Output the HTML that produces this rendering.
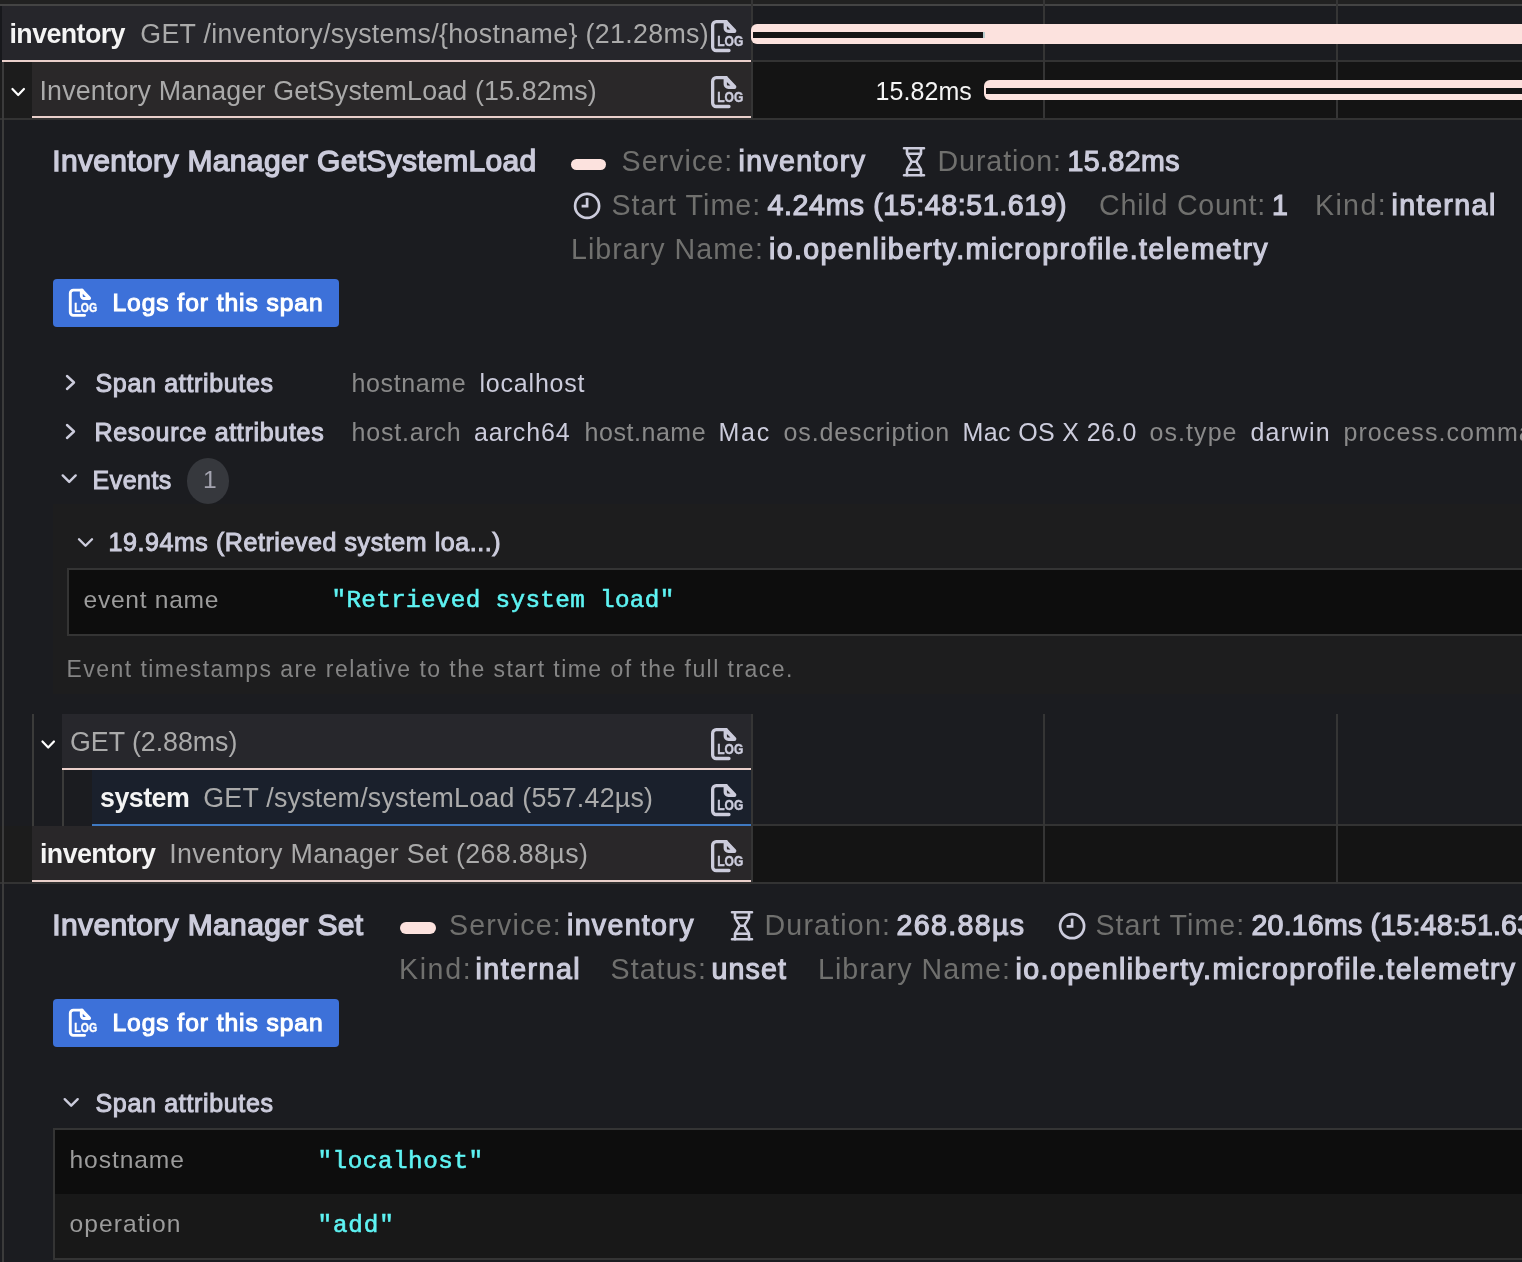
<!DOCTYPE html><html lang="en"><head><meta charset="utf-8"><title>Trace view</title><style>
html,body{margin:0;padding:0;background:#1b1c20;overflow:hidden;}
html{width:1522px;height:1262px;}
body{width:1522px;height:1262px;position:relative;overflow:hidden;font-family:"Liberation Sans", sans-serif;}
.r{position:absolute;}
.t{position:absolute;white-space:pre;line-height:1;margin:0;padding:0;}
svg{position:absolute;overflow:visible;will-change:transform;}
.txt{position:absolute;left:0;top:0;width:100%;height:100%;will-change:transform;}
#app{position:absolute;left:0;top:0;width:1522px;height:1262px;overflow:hidden;background:#1b1c20;}
</style></head><body><div id="app">
<div class="r" style="left:0px;top:0px;width:1522px;height:4px;background:#212121;"></div>
<div class="r" style="left:0px;top:4px;width:1522px;height:2px;background:#444444;"></div>
<div class="r" style="left:0px;top:6px;width:2px;height:56px;background:#17181c;"></div>
<div class="r" style="left:2px;top:6px;width:749px;height:54px;background:#26262b;"></div>
<div class="r" style="left:2px;top:60px;width:749px;height:2px;background:#ead0cb;"></div>
<div class="r" style="left:753px;top:60px;width:769px;height:2px;background:#333333;"></div>
<div class="r" style="left:0px;top:62px;width:1522px;height:56px;background:#1c1c1c;"></div>
<div class="r" style="left:32px;top:62px;width:719px;height:54px;background:#2a2829;"></div>
<div class="r" style="left:32px;top:116px;width:719px;height:2px;background:#ead0cb;"></div>
<div class="r" style="left:753px;top:62px;width:769px;height:56px;background:#141414;"></div>
<div class="r" style="left:0px;top:118px;width:1522px;height:2px;background:#333333;"></div>
<div class="r" style="left:751px;top:0px;width:2px;height:118px;background:#353535;"></div>
<div class="r" style="left:1043px;top:0px;width:2px;height:118px;background:#353535;"></div>
<div class="r" style="left:1336px;top:0px;width:2px;height:118px;background:#353535;"></div>
<div class="r" style="left:751px;top:24px;width:771px;height:20px;background:#fce2de;border-radius:6px 0 0 6px"></div>
<div class="r" style="left:753px;top:32px;width:230px;height:6px;background:#141414;"></div>
<div class="r" style="left:983px;top:32px;width:2px;height:6px;background:#b8cccd;"></div>
<div class="r" style="left:984px;top:80px;width:538px;height:20px;background:#fce2de;border-radius:6px 0 0 6px"></div>
<div class="r" style="left:986px;top:88px;width:536px;height:6px;background:#141414;"></div>
<div class="r" style="left:53px;top:504px;width:1469px;height:190px;background:#1d1d1e;"></div>
<div class="r" style="left:67px;top:568px;width:1455px;height:68px;background:#0d0d0d;border:2px solid #343434;border-right:0;box-sizing:border-box"></div>
<div class="r" style="left:62px;top:714px;width:689px;height:54px;background:#27272c;"></div>
<div class="r" style="left:62px;top:768px;width:689px;height:2px;background:#ead0cb;"></div>
<div class="r" style="left:92px;top:770px;width:659px;height:54px;background:#1a202c;"></div>
<div class="r" style="left:92px;top:824px;width:659px;height:2px;background:#3f79c1;"></div>
<div class="r" style="left:753px;top:824px;width:769px;height:2px;background:#333333;"></div>
<div class="r" style="left:0px;top:826px;width:1522px;height:56px;background:#1c1c1c;"></div>
<div class="r" style="left:32px;top:826px;width:719px;height:54px;background:#292729;"></div>
<div class="r" style="left:32px;top:880px;width:719px;height:2px;background:#ead0cb;"></div>
<div class="r" style="left:753px;top:826px;width:769px;height:56px;background:#141414;"></div>
<div class="r" style="left:0px;top:882px;width:1522px;height:2px;background:#333333;"></div>
<div class="r" style="left:32px;top:714px;width:2px;height:112px;background:#3b3b3a;"></div>
<div class="r" style="left:62px;top:770px;width:2px;height:56px;background:#3b3b3a;"></div>
<div class="r" style="left:751px;top:714px;width:2px;height:168px;background:#353535;"></div>
<div class="r" style="left:1043px;top:714px;width:2px;height:168px;background:#353535;"></div>
<div class="r" style="left:1336px;top:714px;width:2px;height:168px;background:#353535;"></div>
<div class="r" style="left:2px;top:62px;width:2px;height:1200px;background:#3b3b3b;"></div>
<div class="r" style="left:53px;top:279px;width:286px;height:48px;background:#3d71d9;border-radius:4px"></div>
<div class="r" style="left:53px;top:999px;width:286px;height:48px;background:#3d71d9;border-radius:4px"></div>
<div class="r" style="left:571px;top:159px;width:35px;height:11px;background:#fce2de;border-radius:6px"></div>
<div class="r" style="left:400px;top:922px;width:36px;height:12px;background:#fce2de;border-radius:6px"></div>
<div class="r" style="left:186.7px;top:458px;width:42.70000000000002px;height:46.19999999999999px;background:#36383d;border-radius:50%"></div>
<div class="r" style="left:53px;top:1128px;width:1469px;height:132px;background:#0d0d0d;border:2px solid #343434;border-right:0;box-sizing:border-box"></div>
<div class="r" style="left:55px;top:1194px;width:1467px;height:64px;background:#181818;"></div>
<svg style="left:710px;top:19px" width="34.0" height="34.0" viewBox="0 0 34 34"><g transform="translate(0.60 0.80)"><g fill="none" stroke="#ccccdc" stroke-width="3.3" stroke-linejoin="round" stroke-linecap="round"><path d="M18.4 30.700H5.6a3.550 3.550 0 0 1-3.550-3.550V5.450A3.550 3.550 0 0 1 5.600 1.900H15.600"/></g><path d="M13.800 0.300H16.200L25.200 9.800a2 2 0 0 1-1.500 3.400H17.800a4.800 4.800 0 0 1-4.800-4.800V1.900Z" fill="#ccccdc"/><path d="M16.300 6.100L19.800 9.700H17.100a.8.8 0 0 1-.8-.8Z" fill="#28272a"/><text x="6.700" y="26.400" font-family="Liberation Sans, sans-serif" font-weight="700" font-size="14.4" textLength="26" lengthAdjust="spacingAndGlyphs" fill="#ccccdc" stroke="#ccccdc" stroke-width="0.45">LOG</text></g></svg>
<svg style="left:710px;top:75px" width="34.0" height="34.0" viewBox="0 0 34 34"><g transform="translate(0.60 0.80)"><g fill="none" stroke="#ccccdc" stroke-width="3.3" stroke-linejoin="round" stroke-linecap="round"><path d="M18.4 30.700H5.6a3.550 3.550 0 0 1-3.550-3.550V5.450A3.550 3.550 0 0 1 5.600 1.900H15.600"/></g><path d="M13.800 0.300H16.200L25.200 9.800a2 2 0 0 1-1.500 3.400H17.800a4.800 4.800 0 0 1-4.800-4.800V1.900Z" fill="#ccccdc"/><path d="M16.300 6.100L19.800 9.700H17.100a.8.8 0 0 1-.8-.8Z" fill="#28272a"/><text x="6.700" y="26.400" font-family="Liberation Sans, sans-serif" font-weight="700" font-size="14.4" textLength="26" lengthAdjust="spacingAndGlyphs" fill="#ccccdc" stroke="#ccccdc" stroke-width="0.45">LOG</text></g></svg>
<svg style="left:710px;top:727px" width="34.0" height="34.0" viewBox="0 0 34 34"><g transform="translate(0.60 0.80)"><g fill="none" stroke="#ccccdc" stroke-width="3.3" stroke-linejoin="round" stroke-linecap="round"><path d="M18.4 30.700H5.6a3.550 3.550 0 0 1-3.550-3.550V5.450A3.550 3.550 0 0 1 5.600 1.900H15.600"/></g><path d="M13.800 0.300H16.200L25.200 9.800a2 2 0 0 1-1.500 3.400H17.800a4.800 4.800 0 0 1-4.800-4.800V1.900Z" fill="#ccccdc"/><path d="M16.300 6.100L19.800 9.700H17.100a.8.8 0 0 1-.8-.8Z" fill="#28272a"/><text x="6.700" y="26.400" font-family="Liberation Sans, sans-serif" font-weight="700" font-size="14.4" textLength="26" lengthAdjust="spacingAndGlyphs" fill="#ccccdc" stroke="#ccccdc" stroke-width="0.45">LOG</text></g></svg>
<svg style="left:710px;top:783px" width="34.0" height="34.0" viewBox="0 0 34 34"><g transform="translate(0.60 0.80)"><g fill="none" stroke="#ccccdc" stroke-width="3.3" stroke-linejoin="round" stroke-linecap="round"><path d="M18.4 30.700H5.6a3.550 3.550 0 0 1-3.550-3.550V5.450A3.550 3.550 0 0 1 5.600 1.900H15.600"/></g><path d="M13.800 0.300H16.200L25.200 9.800a2 2 0 0 1-1.500 3.400H17.800a4.800 4.800 0 0 1-4.800-4.800V1.900Z" fill="#ccccdc"/><path d="M16.300 6.100L19.800 9.700H17.100a.8.8 0 0 1-.8-.8Z" fill="#28272a"/><text x="6.700" y="26.400" font-family="Liberation Sans, sans-serif" font-weight="700" font-size="14.4" textLength="26" lengthAdjust="spacingAndGlyphs" fill="#ccccdc" stroke="#ccccdc" stroke-width="0.45">LOG</text></g></svg>
<svg style="left:710px;top:839px" width="34.0" height="34.0" viewBox="0 0 34 34"><g transform="translate(0.60 0.80)"><g fill="none" stroke="#ccccdc" stroke-width="3.3" stroke-linejoin="round" stroke-linecap="round"><path d="M18.4 30.700H5.6a3.550 3.550 0 0 1-3.550-3.550V5.450A3.550 3.550 0 0 1 5.600 1.900H15.600"/></g><path d="M13.800 0.300H16.200L25.200 9.800a2 2 0 0 1-1.500 3.400H17.800a4.800 4.800 0 0 1-4.800-4.800V1.900Z" fill="#ccccdc"/><path d="M16.300 6.100L19.800 9.700H17.100a.8.8 0 0 1-.8-.8Z" fill="#28272a"/><text x="6.700" y="26.400" font-family="Liberation Sans, sans-serif" font-weight="700" font-size="14.4" textLength="26" lengthAdjust="spacingAndGlyphs" fill="#ccccdc" stroke="#ccccdc" stroke-width="0.45">LOG</text></g></svg>
<svg style="left:68px;top:288px" width="29.75" height="29.75" viewBox="0 0 34 34"><g transform="translate(0.57 0.57)"><g fill="none" stroke="#ffffff" stroke-width="3.3" stroke-linejoin="round" stroke-linecap="round"><path d="M18.4 30.700H5.6a3.550 3.550 0 0 1-3.550-3.550V5.450A3.550 3.550 0 0 1 5.600 1.900H15.600"/></g><path d="M13.800 0.300H16.200L25.200 9.800a2 2 0 0 1-1.500 3.400H17.800a4.800 4.800 0 0 1-4.800-4.800V1.900Z" fill="#ffffff"/><path d="M16.300 6.100L19.800 9.700H17.100a.8.8 0 0 1-.8-.8Z" fill="#3d71d9"/><text x="6.700" y="26.400" font-family="Liberation Sans, sans-serif" font-weight="700" font-size="14.4" textLength="26" lengthAdjust="spacingAndGlyphs" fill="#ffffff" stroke="#ffffff" stroke-width="0.45">LOG</text></g></svg>
<svg style="left:68px;top:1008px" width="29.75" height="29.75" viewBox="0 0 34 34"><g transform="translate(0.57 0.57)"><g fill="none" stroke="#ffffff" stroke-width="3.3" stroke-linejoin="round" stroke-linecap="round"><path d="M18.4 30.700H5.6a3.550 3.550 0 0 1-3.550-3.550V5.450A3.550 3.550 0 0 1 5.600 1.900H15.600"/></g><path d="M13.800 0.300H16.200L25.200 9.800a2 2 0 0 1-1.500 3.400H17.800a4.800 4.800 0 0 1-4.800-4.800V1.900Z" fill="#ffffff"/><path d="M16.300 6.100L19.800 9.700H17.100a.8.8 0 0 1-.8-.8Z" fill="#3d71d9"/><text x="6.700" y="26.400" font-family="Liberation Sans, sans-serif" font-weight="700" font-size="14.4" textLength="26" lengthAdjust="spacingAndGlyphs" fill="#ffffff" stroke="#ffffff" stroke-width="0.45">LOG</text></g></svg>
<svg style="left:902px;top:146px" width="23" height="31" viewBox="0 0 23 31"><g transform="translate(0.50 0.30)"><g fill="none" stroke="#ccccdc" stroke-width="2.6" stroke-linecap="round" stroke-linejoin="round"><path d="M1.5 2H21.5M1.5 29H21.5"/><path d="M4.5 2V6.5C4.5 10 8.6 12.5 8.8 15.5C8.6 18.5 4.5 21 4.5 24.5V29"/><path d="M18.5 2V6.5C18.5 10 14.4 12.5 14.2 15.5C14.4 18.500 18.5 21 18.5 24.5V29"/><path d="M4.5 7.5H18.5M4.5 23.500H18.500M8.800 15.500H14.200"/></g></g></svg>
<svg style="left:730px;top:910px" width="23" height="31" viewBox="0 0 23 31"><g transform="translate(0.50 0.30)"><g fill="none" stroke="#ccccdc" stroke-width="2.6" stroke-linecap="round" stroke-linejoin="round"><path d="M1.5 2H21.5M1.5 29H21.5"/><path d="M4.5 2V6.5C4.5 10 8.6 12.5 8.8 15.5C8.6 18.5 4.5 21 4.5 24.5V29"/><path d="M18.5 2V6.5C18.5 10 14.4 12.5 14.2 15.5C14.4 18.500 18.5 21 18.5 24.5V29"/><path d="M4.5 7.5H18.5M4.5 23.500H18.500M8.800 15.500H14.200"/></g></g></svg>
<svg style="left:572px;top:190px" width="30" height="30" viewBox="0 0 30 30"><g transform="translate(0.10 0.90)"><g fill="none" stroke="#ccccdc" stroke-width="2.7" stroke-linecap="butt"><circle cx="15" cy="15" r="12"/><path d="M15 7.200V15.200H9.500"/></g></g></svg>
<svg style="left:1057px;top:911px" width="30" height="30" viewBox="0 0 30 30"><g transform="translate(0.10 0.20)"><g fill="none" stroke="#ccccdc" stroke-width="2.7" stroke-linecap="butt"><circle cx="15" cy="15" r="12"/><path d="M15 7.200V15.200H9.500"/></g></g></svg>
<svg style="left:8px;top:82px" width="20" height="20" viewBox="0 0 20 20"><g transform="translate(0.20 0.00)"><path d="M4.25 7.0L10 13.0L15.75 7.0" fill="none" stroke="#ffffff" stroke-width="2.2" stroke-linecap="round" stroke-linejoin="round"/></g></svg>
<svg style="left:38px;top:734px" width="20" height="20" viewBox="0 0 20 20"><g transform="translate(0.20 0.50)"><path d="M4.25 7.0L10 13.0L15.75 7.0" fill="none" stroke="#ffffff" stroke-width="2.2" stroke-linecap="round" stroke-linejoin="round"/></g></svg>
<svg style="left:60px;top:372px" width="20" height="20" viewBox="0 0 20 20"><g transform="translate(0.50 0.50)"><path d="M6.5 3.5L13.5 10L6.5 16.5" fill="none" stroke="#ccccdc" stroke-width="2.4" stroke-linecap="round" stroke-linejoin="round"/></g></svg>
<svg style="left:60px;top:421px" width="20" height="20" viewBox="0 0 20 20"><g transform="translate(0.50 0.50)"><path d="M6.5 3.5L13.5 10L6.5 16.5" fill="none" stroke="#ccccdc" stroke-width="2.4" stroke-linecap="round" stroke-linejoin="round"/></g></svg>
<svg style="left:59px;top:468px" width="20" height="20" viewBox="0 0 20 20"><g transform="translate(0.20 0.70)"><path d="M3.5 6.75L10 13.25L16.5 6.75" fill="none" stroke="#ccccdc" stroke-width="2.4" stroke-linecap="round" stroke-linejoin="round"/></g></svg>
<svg style="left:75px;top:532px" width="20" height="20" viewBox="0 0 20 20"><g transform="translate(0.50 0.50)"><path d="M3.5 6.75L10 13.25L16.5 6.75" fill="none" stroke="#ccccdc" stroke-width="2.4" stroke-linecap="round" stroke-linejoin="round"/></g></svg>
<svg style="left:61px;top:1092px" width="20" height="20" viewBox="0 0 20 20"><g transform="translate(0.20 0.40)"><path d="M3.5 6.75L10 13.25L16.5 6.75" fill="none" stroke="#ccccdc" stroke-width="2.4" stroke-linecap="round" stroke-linejoin="round"/></g></svg>
<div class="txt">
<span class="t" id="t0" style="left:9.50px;top:21.06px;font-size:26.8px;color:#f4f4f4;font-weight:700;letter-spacing:-0.575px;">inventory</span>
<span class="t" id="t1" style="left:140.25px;top:21.06px;font-size:26.8px;color:#aaaaaa;font-weight:400;letter-spacing:0.319px;">GET /inventory/systems/{hostname} (21.28ms)</span>
<span class="t" id="t2" style="left:39.50px;top:77.51px;font-size:26.8px;color:#aaaaaa;font-weight:400;letter-spacing:0.155px;">Inventory Manager GetSystemLoad (15.82ms)</span>
<span class="t" id="t3" style="left:875.50px;top:78.84px;font-size:25px;color:#f4f4f4;font-weight:400;letter-spacing:0.067px;">15.82ms</span>
<span class="t" id="t4" style="left:52.25px;top:145.60px;font-size:30px;color:#ccccdc;font-weight:400;-webkit-text-stroke:1.35px;letter-spacing:0.347px;">Inventory Manager GetSystemLoad</span>
<span class="t" id="t5" style="left:621.50px;top:146.79px;font-size:28.6px;color:#70706e;font-weight:400;letter-spacing:1.057px;">Service:</span>
<span class="t" id="t6" style="left:738.50px;top:146.79px;font-size:28.6px;color:#ccccdc;font-weight:400;-webkit-text-stroke:1.14px;letter-spacing:1.300px;">inventory</span>
<span class="t" id="t7" style="left:937.50px;top:146.79px;font-size:28.6px;color:#70706e;font-weight:400;letter-spacing:0.925px;">Duration:</span>
<span class="t" id="t8" style="left:1067.50px;top:146.79px;font-size:28.6px;color:#ccccdc;font-weight:400;-webkit-text-stroke:1.14px;letter-spacing:0.400px;">15.82ms</span>
<span class="t" id="t9" style="left:611.50px;top:190.79px;font-size:28.6px;color:#70706e;font-weight:400;letter-spacing:1.040px;">Start Time:</span>
<span class="t" id="t10" style="left:767.50px;top:190.79px;font-size:28.6px;color:#ccccdc;font-weight:400;-webkit-text-stroke:1.14px;letter-spacing:0.570px;">4.24ms (15:48:51.619)</span>
<span class="t" id="t11" style="left:1099.00px;top:190.79px;font-size:28.6px;color:#70706e;font-weight:400;letter-spacing:0.800px;">Child Count:</span>
<span class="t" id="t12" style="left:1272.00px;top:190.79px;font-size:28.6px;color:#ccccdc;font-weight:400;-webkit-text-stroke:1.14px;letter-spacing:0.000px;">1</span>
<span class="t" id="t13" style="left:1315.00px;top:190.79px;font-size:28.6px;color:#70706e;font-weight:400;letter-spacing:1.350px;">Kind:</span>
<span class="t" id="t14" style="left:1391.50px;top:190.79px;font-size:28.6px;color:#ccccdc;font-weight:400;-webkit-text-stroke:1.14px;letter-spacing:1.429px;">internal</span>
<span class="t" id="t15" style="left:571.00px;top:234.79px;font-size:28.6px;color:#70706e;font-weight:400;letter-spacing:1.033px;">Library Name:</span>
<span class="t" id="t16" style="left:769.00px;top:234.79px;font-size:28.6px;color:#ccccdc;font-weight:400;-webkit-text-stroke:1.14px;letter-spacing:1.372px;">io.openliberty.microprofile.telemetry</span>
<span class="t" id="t17" style="left:112.50px;top:290.98px;font-size:24.6px;color:#ffffff;font-weight:400;-webkit-text-stroke:1.11px;letter-spacing:0.941px;">Logs for this span</span>
<span class="t" id="t18" style="left:95.50px;top:370.84px;font-size:25px;color:#ccccdc;font-weight:400;-webkit-text-stroke:1.00px;letter-spacing:0.671px;">Span attributes</span>
<span class="t" id="t19" style="left:351.50px;top:370.84px;font-size:25px;color:#8a8a8a;font-weight:400;letter-spacing:0.629px;">hostname</span>
<span class="t" id="t20" style="left:479.50px;top:370.84px;font-size:25px;color:#ccccdc;font-weight:400;letter-spacing:0.800px;">localhost</span>
<span class="t" id="t21" style="left:94.50px;top:419.84px;font-size:25px;color:#ccccdc;font-weight:400;-webkit-text-stroke:1.00px;letter-spacing:0.689px;">Resource attributes</span>
<span class="t" id="t22" style="left:351.50px;top:419.84px;font-size:25px;color:#8a8a8a;font-weight:400;letter-spacing:0.800px;">host.arch</span>
<span class="t" id="t23" style="left:474.00px;top:419.84px;font-size:25px;color:#ccccdc;font-weight:400;letter-spacing:0.900px;">aarch64</span>
<span class="t" id="t24" style="left:584.50px;top:419.84px;font-size:25px;color:#8a8a8a;font-weight:400;letter-spacing:0.550px;">host.name</span>
<span class="t" id="t25" style="left:718.50px;top:419.84px;font-size:25px;color:#ccccdc;font-weight:400;letter-spacing:1.700px;">Mac</span>
<span class="t" id="t26" style="left:783.50px;top:419.84px;font-size:25px;color:#8a8a8a;font-weight:400;letter-spacing:0.877px;">os.description</span>
<span class="t" id="t27" style="left:962.50px;top:419.84px;font-size:25px;color:#ccccdc;font-weight:400;letter-spacing:0.367px;">Mac OS X 26.0</span>
<span class="t" id="t28" style="left:1149.50px;top:419.84px;font-size:25px;color:#8a8a8a;font-weight:400;letter-spacing:1.067px;">os.type</span>
<span class="t" id="t29" style="left:1250.50px;top:419.84px;font-size:25px;color:#ccccdc;font-weight:400;letter-spacing:1.080px;">darwin</span>
<span class="t" id="t30" style="left:1343.50px;top:419.84px;font-size:25px;color:#8a8a8a;font-weight:400;letter-spacing:1.067px;">process.command_args</span>
<span class="t" id="t31" style="left:92.50px;top:467.84px;font-size:25px;color:#ccccdc;font-weight:400;-webkit-text-stroke:1.00px;letter-spacing:0.480px;">Events</span>
<span class="t" id="t32" style="left:203.00px;top:468.18px;font-size:24.6px;color:#a4a4b0;font-weight:400;letter-spacing:0.000px;">1</span>
<span class="t" id="t33" style="left:108.50px;top:529.84px;font-size:25px;color:#ccccdc;font-weight:400;-webkit-text-stroke:1.00px;letter-spacing:0.575px;">19.94ms (Retrieved system loa...)</span>
<span class="t" id="t34" style="left:83.50px;top:587.78px;font-size:24.6px;color:#9c9c9c;font-weight:400;letter-spacing:0.711px;">event name</span>
<span class="t" id="t35" style="left:331.50px;top:589.36px;font-size:24.3px;color:#5ef3f3;font-weight:400;font-family:'Liberation Mono', monospace;-webkit-text-stroke:0.6px;letter-spacing:0.336px;">"Retrieved system load"</span>
<span class="t" id="t36" style="left:66.50px;top:657.53px;font-size:23px;color:#858585;font-weight:400;letter-spacing:1.452px;">Event timestamps are relative to the start time of the full trace.</span>
<span class="t" id="t37" style="left:70.00px;top:729.06px;font-size:26.8px;color:#aaaaaa;font-weight:400;letter-spacing:-0.036px;">GET (2.88ms)</span>
<span class="t" id="t38" style="left:100.00px;top:785.31px;font-size:26.8px;color:#f4f4f4;font-weight:700;letter-spacing:-0.520px;">system</span>
<span class="t" id="t39" style="left:203.25px;top:785.31px;font-size:26.8px;color:#aaaaaa;font-weight:400;letter-spacing:0.231px;">GET /system/systemLoad (557.42µs)</span>
<span class="t" id="t40" style="left:40.00px;top:841.06px;font-size:26.8px;color:#f4f4f4;font-weight:700;letter-spacing:-0.575px;">inventory</span>
<span class="t" id="t41" style="left:169.25px;top:841.06px;font-size:26.8px;color:#aaaaaa;font-weight:400;letter-spacing:0.368px;">Inventory Manager Set (268.88µs)</span>
<span class="t" id="t42" style="left:52.25px;top:910.11px;font-size:30px;color:#ccccdc;font-weight:400;-webkit-text-stroke:1.35px;letter-spacing:0.370px;">Inventory Manager Set</span>
<span class="t" id="t43" style="left:449.00px;top:911.29px;font-size:28.6px;color:#70706e;font-weight:400;letter-spacing:1.200px;">Service:</span>
<span class="t" id="t44" style="left:567.00px;top:911.29px;font-size:28.6px;color:#ccccdc;font-weight:400;-webkit-text-stroke:1.14px;letter-spacing:1.300px;">inventory</span>
<span class="t" id="t45" style="left:764.50px;top:911.29px;font-size:28.6px;color:#70706e;font-weight:400;letter-spacing:1.175px;">Duration:</span>
<span class="t" id="t46" style="left:896.50px;top:911.29px;font-size:28.6px;color:#ccccdc;font-weight:400;-webkit-text-stroke:1.14px;letter-spacing:1.343px;">268.88µs</span>
<span class="t" id="t47" style="left:1095.50px;top:911.29px;font-size:28.6px;color:#70706e;font-weight:400;letter-spacing:1.040px;">Start Time:</span>
<span class="t" id="t48" style="left:1251.50px;top:911.29px;font-size:28.6px;color:#ccccdc;font-weight:400;-webkit-text-stroke:1.14px;letter-spacing:0.180px;">20.16ms (15:48:51.639)</span>
<span class="t" id="t49" style="left:399.00px;top:954.54px;font-size:28.6px;color:#70706e;font-weight:400;letter-spacing:1.600px;">Kind:</span>
<span class="t" id="t50" style="left:475.50px;top:954.54px;font-size:28.6px;color:#ccccdc;font-weight:400;-webkit-text-stroke:1.14px;letter-spacing:1.486px;">internal</span>
<span class="t" id="t51" style="left:610.50px;top:954.54px;font-size:28.6px;color:#70706e;font-weight:400;letter-spacing:1.067px;">Status:</span>
<span class="t" id="t52" style="left:711.50px;top:954.54px;font-size:28.6px;color:#ccccdc;font-weight:400;-webkit-text-stroke:1.14px;letter-spacing:1.100px;">unset</span>
<span class="t" id="t53" style="left:818.00px;top:954.54px;font-size:28.6px;color:#70706e;font-weight:400;letter-spacing:1.033px;">Library Name:</span>
<span class="t" id="t54" style="left:1015.50px;top:954.54px;font-size:28.6px;color:#ccccdc;font-weight:400;-webkit-text-stroke:1.14px;letter-spacing:1.400px;">io.openliberty.microprofile.telemetry</span>
<span class="t" id="t55" style="left:112.50px;top:1010.98px;font-size:24.6px;color:#ffffff;font-weight:400;-webkit-text-stroke:1.11px;letter-spacing:0.941px;">Logs for this span</span>
<span class="t" id="t56" style="left:95.50px;top:1090.84px;font-size:25px;color:#ccccdc;font-weight:400;-webkit-text-stroke:1.00px;letter-spacing:0.671px;">Span attributes</span>
<span class="t" id="t57" style="left:69.50px;top:1147.93px;font-size:24.6px;color:#9c9c9c;font-weight:400;letter-spacing:0.914px;">hostname</span>
<span class="t" id="t58" style="left:317.50px;top:1150.11px;font-size:24.3px;color:#5ef3f3;font-weight:400;font-family:'Liberation Mono', monospace;-webkit-text-stroke:0.6px;letter-spacing:0.520px;">"localhost"</span>
<span class="t" id="t59" style="left:69.50px;top:1212.48px;font-size:24.6px;color:#9c9c9c;font-weight:400;letter-spacing:1.050px;">operation</span>
<span class="t" id="t60" style="left:317.50px;top:1213.86px;font-size:24.3px;color:#5ef3f3;font-weight:400;font-family:'Liberation Mono', monospace;-webkit-text-stroke:0.6px;letter-spacing:0.850px;">"add"</span>
</div>
</div></body></html>
